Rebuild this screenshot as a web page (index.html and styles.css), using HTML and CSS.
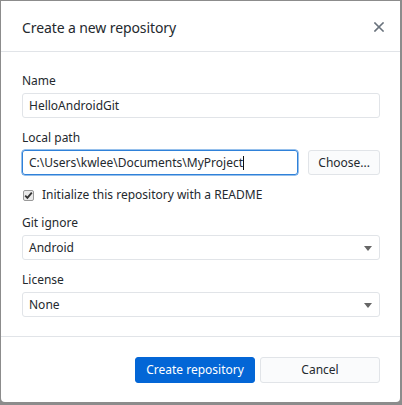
FILE: index.html
```html
<!DOCTYPE html>
<html>
<head>
<meta charset="utf-8">
<link rel="stylesheet" href="styles.css">
</head>
<body>
<div class="frame">
  <div class="dialog">
    <div class="header">
      <h1 class="title">Create a new repository</h1>
      <span class="close" aria-label="Close">
        <svg width="10" height="10" viewBox="0 0 10 10"><path d="M1 1 L9 9 M9 1 L1 9" stroke="#6a737d" stroke-width="1.6" stroke-linecap="square"/></svg>
      </span>
    </div>
    <div class="body">
      <div class="field">
        <label class="label">Name</label>
        <div class="input">HelloAndroidGit</div>
      </div>
      <div class="field">
        <label class="label">Local path</label>
        <div class="row">
          <div class="input focused">C:\Users\kwlee\Documents\MyProject<span class="caret"></span></div>
          <div class="btn">Choose...</div>
        </div>
      </div>
      <div class="check">
        <span class="box">
          <svg width="9" height="9" viewBox="0 0 9 9"><path d="M1.2 4.6 L3.4 6.9 L7.8 1.6" fill="none" stroke="#333" stroke-width="1.8"/></svg>
        </span>
        <span>Initialize this repository with a README</span>
      </div>
      <div class="field">
        <label class="label">Git ignore</label>
        <div class="input select">Android<span class="arrow"></span></div>
      </div>
      <div class="field">
        <label class="label">License</label>
        <div class="input select">None<span class="arrow"></span></div>
      </div>
    </div>
    <div class="footer">
      <div class="btn primary">Create repository</div>
      <div class="btn cancel">Cancel</div>
    </div>
  </div>
</div>
</body>
</html>
```
FILE: styles.css
```css
html, body { margin: 0; padding: 0; }
body {
  width: 402px;
  height: 405px;
  background: #8c8c8c;
  font-family: "Noto Sans", "Open Sans", sans-serif;
  color: #24292e;
  overflow: hidden;
}
.frame {
  box-sizing: border-box;
  width: 402px;
  height: 405px;
  padding: 1px 2px 3px 1px;
}
.dialog {
  background: #fff;
  height: 100%;
  border-radius: 0 0 4px 4px;
  display: flex;
  flex-direction: column;
}
.header {
  height: 50px;
  flex: none;
  border-bottom: 1px solid #e1e4e8;
  display: flex;
  align-items: center;
  justify-content: space-between;
  padding: 0 16px 0 21px;
}
.title {
  margin: 0;
  font-size: 14px;
  font-weight: 400;
  letter-spacing: -0.1px;
  padding-top: 2px;
}
.close { display: flex; padding-top: 2px; }
.body {
  flex: 1;
  padding: 21px 20px 0 21px;
  display: flex;
  flex-direction: column;
}
.field { display: flex; flex-direction: column; margin-bottom: 12px; }
.label { font-size: 12px; line-height: 16px; margin-bottom: 4px; }
.input {
  box-sizing: border-box;
  height: 25px;
  border: 1px solid #e1e4e8;
  border-radius: 3px;
  padding: 0 6px;
  font-size: 12px;
  line-height: 23px;
  display: flex;
  align-items: center;
  position: relative;
}
.row { display: flex; gap: 10px; }
.row .input { flex: 1; }
.focused { border-color: #2f81d9; box-shadow: 0 0 0 0.5px #2f81d9; }
.caret { display: inline-block; width: 1px; height: 14px; background: #111; }
.btn {
  box-sizing: border-box;
  height: 25px;
  border: 1px solid #e1e4e8;
  border-radius: 3px;
  background: #fafbfc;
  font-size: 12px;
  display: flex;
  align-items: center;
  justify-content: center;
  padding: 0 9px;
}
.check {
  display: flex;
  align-items: center;
  gap: 8px;
  font-size: 12px;
  line-height: 16px;
  margin: 0 0 12px 1px;
}
.box {
  box-sizing: border-box;
  width: 11px;
  height: 11px;
  border: 1px solid #999;
  border-radius: 2px;
  background: #e9e9e9;
  display: flex;
  align-items: center;
  justify-content: center;
}
.select .arrow {
  position: absolute;
  right: 7px;
  top: 10px;
  width: 0;
  height: 0;
  border-left: 4px solid transparent;
  border-right: 4px solid transparent;
  border-top: 5px solid #666;
}
.footer {
  flex: none;
  box-sizing: border-box;
  height: 66px;
  border-top: 1px solid #e1e4e8;
  display: flex;
  justify-content: flex-end;
  align-items: center;
  gap: 5px;
  padding: 0 20px 0 0;
}
.footer .btn { width: 120px; height: 26px; font-size: 12px; }
.primary { background: #0366d6; border-color: #0366d6; color: #fff; }
.cancel { background: #fafbfc; }
```
